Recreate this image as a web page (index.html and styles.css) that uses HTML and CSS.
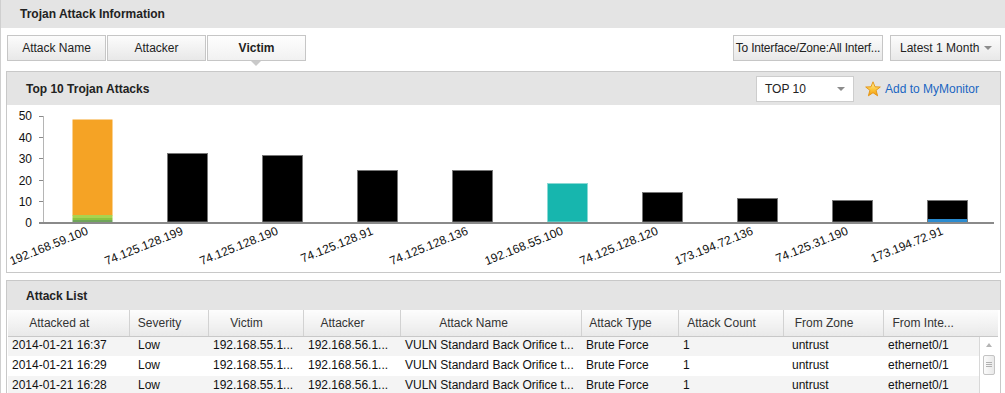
FILE: index.html
```html
<!DOCTYPE html>
<html lang="en">
  <head>
    <meta charset="utf-8">
    <title>Trojan Attack Information</title>
    <link rel="stylesheet" href="styles.css">
  </head>
  <body>
    <div class="page">
      <div class="page-head">Trojan Attack Information</div>

      <div class="toolbar">
        <div class="tabs">
          <button class="tab">Attack Name</button>
          <button class="tab">Attacker</button>
          <button class="tab active">Victim</button>
        </div>
        <div class="filters">
          <button class="btn iface">To Interface/Zone:All Interf...</button>
          <button class="btn drop">Latest 1 Month<span class="caret"></span></button>
        </div>
      </div>

      <div class="panel chart-panel">
        <div class="panel-head">
          <span class="panel-title">Top 10 Trojan Attacks</span>
          <div class="head-tools">
            <div class="select">TOP 10<span class="caret"></span></div>
            <a class="monitor" href="#">
              <svg width="16" height="16" viewBox="0 0 16 16">
                <defs>
                  <linearGradient id="starFill" x1="0" y1="0" x2="0" y2="1">
                    <stop offset="0" stop-color="#fff4a8"/>
                    <stop offset="0.55" stop-color="#fcc53a"/>
                    <stop offset="1" stop-color="#f29a0e"/>
                  </linearGradient>
                </defs>
                <polygon points="8,0.8 10,5.8 15.3,6 11.1,9.3 12.6,14.8 8,11.7 3.4,14.8 4.9,9.3 0.7,6 6,5.8" fill="url(#starFill)" stroke="#e3920f" stroke-width="0.9" stroke-linejoin="round"/>
              </svg>
              Add to MyMonitor
            </a>
          </div>
        </div>

        <!-- chart uses page coordinates in its viewBox -->
        <svg class="chart" width="993" height="167" viewBox="7 105 993 167">
          <g class="ylab">
            <text x="32" y="120">50</text>
            <text x="32" y="141.5">40</text>
            <text x="32" y="163">30</text>
            <text x="32" y="184.5">20</text>
            <text x="32" y="206">10</text>
            <text x="32" y="227">0</text>
          </g>
          <g stroke="#8a8a8a" stroke-width="1">
            <line x1="39" y1="116.5" x2="44" y2="116.5"/>
            <line x1="39" y1="137.5" x2="44" y2="137.5"/>
            <line x1="39" y1="158.5" x2="44" y2="158.5"/>
            <line x1="39" y1="180.5" x2="44" y2="180.5"/>
            <line x1="39" y1="201.5" x2="44" y2="201.5"/>
            <line x1="43.5" y1="116" x2="43.5" y2="222" stroke="#b5b5b5"/>
          </g>

          <rect x="72.5" y="119.5" width="40" height="96" fill="#f5a325"/>
          <rect x="72.5" y="215" width="40" height="3" fill="#a9d34f"/>
          <rect x="72.5" y="218" width="40" height="2" fill="#8cc440"/>
          <rect x="72.5" y="220" width="40" height="2" fill="#6fa55a"/>

          <g fill="#000" stroke="#777">
            <rect x="167.5" y="153.5" width="40" height="68.5"/>
            <rect x="262.5" y="155.5" width="40" height="66.5"/>
            <rect x="357.5" y="170.5" width="40" height="51.5"/>
            <rect x="452.5" y="170.5" width="40" height="51.5"/>
            <rect x="642.5" y="192.5" width="40" height="29.5"/>
            <rect x="737.5" y="198.5" width="40" height="23.5"/>
            <rect x="832.5" y="200.5" width="40" height="21.5"/>
            <rect x="927.5" y="200.5" width="40" height="21.5"/>
          </g>
          <rect x="547.5" y="183.5" width="40" height="38.5" fill="#17b6ae" stroke="#8ad9d4"/>
          <rect x="928" y="219" width="39" height="3" fill="#2a8bd0"/>

          <rect x="39" y="222" width="955" height="2" fill="#8a8a8a"/>

          <g class="xlab">
            <text x="89" y="234" transform="rotate(-22 89 234)">192.168.59.100</text>
            <text x="184" y="234" transform="rotate(-22 184 234)">74.125.128.199</text>
            <text x="279" y="234" transform="rotate(-22 279 234)">74.125.128.190</text>
            <text x="374" y="234" transform="rotate(-22 374 234)">74.125.128.91</text>
            <text x="469" y="234" transform="rotate(-22 469 234)">74.125.128.136</text>
            <text x="564" y="234" transform="rotate(-22 564 234)">192.168.55.100</text>
            <text x="659" y="234" transform="rotate(-22 659 234)">74.125.128.120</text>
            <text x="754" y="234" transform="rotate(-22 754 234)">173.194.72.136</text>
            <text x="849" y="234" transform="rotate(-22 849 234)">74.125.31.190</text>
            <text x="944" y="234" transform="rotate(-22 944 234)">173.194.72.91</text>
          </g>
        </svg>
      </div>

      <div class="panel list-panel">
        <div class="panel-head">
          <span class="panel-title">Attack List</span>
        </div>
        <div class="grid">
          <table>
            <colgroup>
              <col style="width:121px">
              <col style="width:79px">
              <col style="width:95px">
              <col style="width:97px">
              <col style="width:181px">
              <col style="width:97px">
              <col style="width:105px">
              <col style="width:100px">
              <col style="width:96px">
              <col style="width:19px">
            </colgroup>
            <thead>
              <tr>
                <th>Attacked at</th>
                <th>Severity</th>
                <th>Victim</th>
                <th>Attacker</th>
                <th class="wide">Attack Name</th>
                <th>Attack Type</th>
                <th>Attack Count</th>
                <th>From Zone</th>
                <th class="left">From Inte...</th>
                <th class="blank"></th>
              </tr>
            </thead>
            <tbody>
              <tr class="odd">
                <td class="first">2014-01-21 16:37</td>
                <td class="indent">Low</td>
                <td>192.168.55.1...</td>
                <td>192.168.56.1...</td>
                <td>VULN Standard Back Orifice t...</td>
                <td>Brute Force</td>
                <td>1</td>
                <td class="indent">untrust</td>
                <td>ethernet0/1</td>
                <td class="scroll" rowspan="3">
                  <div class="sb-up"></div>
                  <div class="sb-thumb"><div class="grip"></div></div>
                </td>
              </tr>
              <tr>
                <td class="first">2014-01-21 16:29</td>
                <td class="indent">Low</td>
                <td>192.168.55.1...</td>
                <td>192.168.56.1...</td>
                <td>VULN Standard Back Orifice t...</td>
                <td>Brute Force</td>
                <td>1</td>
                <td class="indent">untrust</td>
                <td>ethernet0/1</td>
              </tr>
              <tr class="odd">
                <td class="first">2014-01-21 16:28</td>
                <td class="indent">Low</td>
                <td>192.168.55.1...</td>
                <td>192.168.56.1...</td>
                <td>VULN Standard Back Orifice t...</td>
                <td>Brute Force</td>
                <td>1</td>
                <td class="indent">untrust</td>
                <td>ethernet0/1</td>
              </tr>
            </tbody>
          </table>
        </div>
      </div>
    </div>
  </body>
</html>
```

FILE: styles.css
```css
*{
  box-sizing: border-box;
}
html, body{
  margin: 0;
  height: 100%;
  overflow: hidden;
}
body{
  font-family: "Liberation Sans", Arial, sans-serif;
  font-size: 12px;
  color: #222;
  background-color: #fff;
}
.page{
  border-left: 1px solid #cfcfcf;
  min-height: 393px;
}
.page-head{
  height: 28px;
  line-height: 28px;
  padding-left: 19px;
  background-color: #e4e4e4;
  font-weight: bold;
}

/* tabs and filters */
.toolbar{
  display: flex;
  justify-content: space-between;
  margin-top: 7px;
  padding: 0 4px 0 6px;
}
.tabs{
  display: flex;
  gap: 1px;
}
.tab, .btn{
  height: 26px;
  border: 1px solid #c6c6c6;
  background: linear-gradient(#fcfcfc, #e8e8e8);
  font: inherit;
  color: #222;
  padding: 0;
}
.tab{
  position: relative;
  width: 99px;
}
.tab.active{
  background: linear-gradient(#fefefe, #f1f1f1);
  font-weight: bold;
}
.tab.active::after{
  content: "";
  position: absolute;
  left: 43px;
  top: 25px;
  border: 5px solid transparent;
  border-top-color: #c9c9c9;
}
.filters{
  display: flex;
  gap: 7px;
}
.iface{
  width: 150px;
  padding: 0;
  letter-spacing: -0.2px;
  white-space: nowrap;
}
.drop{
  width: 111px;
  display: flex;
  align-items: center;
  padding: 0 8px 0 9px;
}
.caret{
  margin-left: auto;
  border-left: 4px solid transparent;
  border-right: 4px solid transparent;
  border-top: 4px solid #8c8c8c;
}

/* panels */
.panel{
  margin: 10px 4px 0 5px;
  border: 1px solid #c8c8c8;
}
.panel-head{
  display: flex;
  align-items: center;
  height: 33px;
  padding: 0 21px 0 19px;
  background-color: #e4e4e4;
}
.panel-title{
  font-weight: bold;
}
.head-tools{
  margin-left: auto;
  display: flex;
  align-items: center;
}
.select{
  width: 98px;
  height: 26px;
  display: flex;
  align-items: center;
  padding: 0 8px 0 8px;
  background-color: #fff;
  border: 1px solid #cdcdcd;
}
.monitor{
  display: flex;
  align-items: center;
  gap: 4px;
  margin-left: 11px;
  color: #1a66c2;
  text-decoration: none;
}
.chart{
  display: block;
  overflow: visible;
}
.chart text{
  font-family: "Liberation Sans", Arial, sans-serif;
  font-size: 12px;
  fill: #111;
}
.ylab text, .xlab text{
  text-anchor: end;
}

/* attack list */
.list-panel{
  margin-top: 7px;
}
.list-panel .panel-head{
  height: 29px;
}
.grid{
  padding: 0 1px;
}
table{
  width: 990px;
  table-layout: fixed;
  border-collapse: collapse;
}
th{
  height: 26px;
  padding: 0 18px 0 0;
  background: linear-gradient(#fdfdfd, #e9e9e9);
  border-bottom: 1px solid #c8c8c8;
  border-right: 1px solid #d2d2d2;
  font-weight: normal;
  color: #333;
  text-align: center;
  white-space: nowrap;
}
th.wide{
  padding-right: 34px;
}
th.left{
  text-align: left;
  padding-left: 9px;
  border-right: none;
}
th.blank{
  border-right: none;
  padding: 0;
}
td{
  height: 20px;
  padding: 0 0 2px 5px;
  white-space: nowrap;
  overflow: hidden;
  color: #111;
}
td.first{
  padding-left: 4px;
}
td.indent{
  padding-left: 9px;
}
tr.odd td{
  background-color: #f4f4f4;
}
td.scroll, tr.odd td.scroll{
  vertical-align: top;
  padding: 0;
  background-color: #fff;
  border-left: 1px solid #d8d8d8;
}
.sb-up{
  width: 0;
  margin: 6px auto 0;
  border-left: 3px solid transparent;
  border-right: 3px solid transparent;
  border-bottom: 4px solid #b4b4b4;
}
.sb-thumb{
  width: 12px;
  height: 20px;
  margin: 8px 0 0 3px;
  border: 1px solid #c4c4c4;
  border-radius: 2px;
  background: linear-gradient(to right, #fbfbfb, #e9e9e9);
  padding-top: 6px;
}
.grip{
  width: 6px;
  height: 5px;
  margin: 0 auto;
  border-top: 1px solid #b0b0b0;
  border-bottom: 1px solid #b0b0b0;
  background: linear-gradient(#b0b0b0, #b0b0b0) center / 100% 1px no-repeat;
}
```
